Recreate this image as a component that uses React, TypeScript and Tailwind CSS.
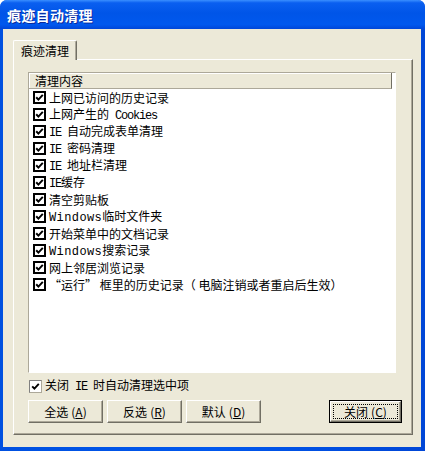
import React from 'react';

const items: React.ReactNode[] = [
  '上网已访问的历史记录',
  <>上网产生的<Latin> Cookies</Latin></>,
  <><Latin>IE </Latin>自动完成表单清理</>,
  <><Latin>IE </Latin>密码清理</>,
  <><Latin>IE </Latin>地址栏清理</>,
  <><Latin>IE</Latin>缓存</>,
  '清空剪贴板',
  <><Latin wide>Windows</Latin>临时文件夹</>,
  '开始菜单中的文档记录',
  <><Latin wide>Windows</Latin>搜索记录</>,
  '网上邻居浏览记录',
  '“运行” 框里的历史记录（ 电脑注销或者重启后生效）',
];

function Latin({ children, wide }: { children: React.ReactNode; wide?: boolean }) {
  return (
    <span
      className={
        wide
          ? "[font-family:'Liberation_Mono',monospace] text-[12px] tracking-[0.4px] whitespace-pre"
          : "[font-family:'Liberation_Mono',monospace] text-[12px] tracking-[-1.2px] whitespace-pre"
      }
    >
      {children}
    </span>
  );
}

function ListCheck() {
  return (
    <svg width="13" height="13" viewBox="0 0 13 13" className="shrink-0">
      <rect x="1" y="1" width="11" height="11" fill="#fff" stroke="#000" strokeWidth="2" />
      <path d="M3.2 6.3 L5.4 8.6 L9.8 3.9" fill="none" stroke="#000" strokeWidth="2" />
    </svg>
  );
}

function SmallCheck() {
  return (
    <svg width="13" height="13" viewBox="0 0 13 13" className="shrink-0">
      <rect x="0.5" y="0.5" width="12" height="12" fill="#fff" stroke="#aca899" />
      <path d="M0.5 12.5 V0.5 H12.5" fill="none" stroke="#808080" />
      <path d="M3.2 6.3 L5.4 8.6 L9.8 3.9" fill="none" stroke="#000" strokeWidth="1.9" />
    </svg>
  );
}

function Btn({ label, hotkey, primary }: { label: string; hotkey: string; primary?: boolean }) {
  const face = (
    <div className="flex h-full w-full items-center justify-center border-t border-l border-white border-r border-b border-r-[#716f64] border-b-[#716f64] shadow-[inset_-1px_-1px_0_#aca899] text-[12px] text-black">
      {label}
      <span className="ml-[3px]">
        (<span className="underline">{hotkey}</span>)
      </span>
    </div>
  );
  if (primary) {
    return (
      <div className="relative h-[23px] w-[73px] border border-black bg-[#ece9d8]">
        {face}
        <div className="pointer-events-none absolute inset-[3px] border border-dotted border-black" />
      </div>
    );
  }
  return <div className="h-[23px] w-[75px] bg-[#ece9d8]">{face}</div>;
}

export default function App() {
  return (
    <div className="h-[451px] w-[425px] bg-white [font-family:'Noto_Sans_CJK_SC',sans-serif]">
      <div className="flex h-full flex-col overflow-hidden rounded-t-[7px] bg-[linear-gradient(90deg,#0050e0,#0058ee_50%,#0046d6)]">
        {/* Title bar */}
        <div className="flex h-[29px] shrink-0 items-center bg-[linear-gradient(180deg,#3a8fff_0%,#0a5ff0_10%,#0055e8_45%,#0058ee_85%,#0046d8_100%)] pl-[7px]">
          <span className="text-[14px] font-bold leading-none tracking-[0.3px] text-white [text-shadow:1px_1px_0_#0a2a9c]">
            痕迹自动清理
          </span>
        </div>

        {/* Body */}
        <div className="mb-[4px] ml-[3px] mr-[4px] flex flex-1 flex-col bg-[#ece9d8] pl-[10px] pr-[8px] pt-[11px]">
          {/* Tab */}
          <div className="relative z-10 -mb-px flex h-[20px] w-[64px] items-center justify-center rounded-t-[2px] border-l border-t border-r border-l-white border-t-white border-r-[#716f64] bg-[#ece9d8] shadow-[inset_-1px_0_0_#aca899] text-[12px] text-black">
            痕迹清理
          </div>

          {/* Panel */}
          <div className="flex h-[376px] flex-col border-l border-t border-r border-b border-l-white border-t-white border-r-[#716f64] border-b-[#716f64] pl-[14px] pr-[10px] pt-[12px] shadow-[inset_-1px_-1px_0_#aca899]">
            {/* List */}
            <div className="flex h-[301px] w-[368px] flex-col border border-[#aca899] border-r-white border-b-white bg-white">
              <div className="mr-[3px] flex h-[16px] shrink-0 items-center border-b border-r border-b-[#aca899] border-r-[#716f64] bg-[#ece9d8] pl-[6px] text-[12px] text-black shadow-[inset_1px_1px_0_#ffffff]">
                清理内容
              </div>
              <div className="flex flex-col pl-[4px]">
                {items.map((it, i) => (
                  <div key={i} className="flex h-[17px] items-center gap-[3px] whitespace-pre text-[12px] leading-[17px] text-black">
                    <ListCheck />
                    <span>{it}</span>
                  </div>
                ))}
              </div>
            </div>

            {/* Auto clean option */}
            <div className="ml-[1px] mt-[5px] flex h-[16px] items-center gap-[3px] text-[12px] text-black">
              <SmallCheck />
              <span>
                关闭<Latin> IE </Latin>时自动清理选中项
              </span>
            </div>

            {/* Buttons */}
            <div className="mt-[6px] flex items-center">
              <div className="flex gap-[4px]">
                <Btn label="全选" hotkey="A" />
                <Btn label="反选" hotkey="R" />
                <Btn label="默认" hotkey="D" />
              </div>
              <div className="ml-auto">
                <Btn label="关闭" hotkey="C" primary />
              </div>
            </div>
          </div>
        </div>
      </div>
    </div>
  );
}
